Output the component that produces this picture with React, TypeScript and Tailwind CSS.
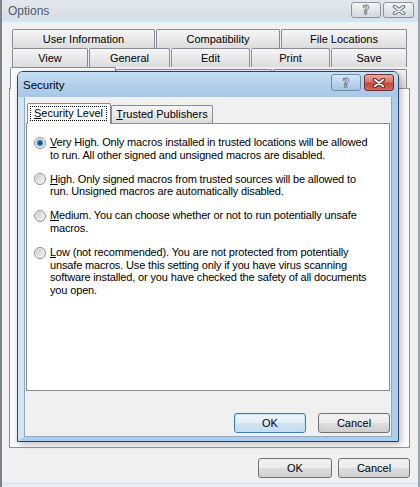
import React from 'react';

const Radio = ({ id, checked }: { id: string; checked?: boolean }) => (
  <svg width="12" height="12" viewBox="0 0 12 12" className="shrink-0 mt-[0.5px]">
    <defs>
      <linearGradient id={`${id}-bg`} x1="0" y1="0" x2="1" y2="1">
        <stop offset="0" stopColor="#cbcbcb" />
        <stop offset="1" stopColor="#f6f6f6" />
      </linearGradient>
      <radialGradient id={`${id}-dot`} cx="0.5" cy="0.5" r="0.5">
        <stop offset="0" stopColor="#0b3656" />
        <stop offset="0.5" stopColor="#1b5f8e" />
        <stop offset="1" stopColor="#5fb5e4" />
      </radialGradient>
    </defs>
    <circle cx="6" cy="6" r="5.5" fill="#f3f3f3" stroke="#8d8e8f" />
    <circle cx="6" cy="6" r="4.2" fill={`url(#${id}-bg)`} />
    {checked && <circle cx="6" cy="6" r="3.3" fill={`url(#${id}-dot)`} />}
  </svg>
);

const CloseGlyph = ({ outline, fill }: { outline: string; fill: string }) => (
  <svg width="14" height="10" viewBox="0 0 14 10">
    <path d="M2.5 1.5 L11.5 8.5 M11.5 1.5 L2.5 8.5" stroke={outline} strokeWidth="3.6" strokeLinecap="round" />
    <path d="M2.5 1.5 L11.5 8.5 M11.5 1.5 L2.5 8.5" stroke={fill} strokeWidth="1.6" strokeLinecap="round" />
  </svg>
);

const tabBase =
  'flex items-center justify-center border border-b-0 border-[#898c95] rounded-t-[2px] bg-[linear-gradient(#f5f5f5,#e9e9e9_50%,#dcdcdc)] whitespace-nowrap';

const btnBase =
  'h-[20px] flex items-center justify-center rounded-[3px] border text-[11px]';

export default function App() {
  return (
    <div className="w-[420px] h-[487px] relative overflow-hidden flex flex-col bg-[#f0f0f0] border-l-2 border-r-2 border-l-[#7d838a] border-r-[#9aa1a8] font-['Liberation_Sans',Arial,sans-serif] text-[11px] text-black">
      {/* Options title bar */}
      <div className="h-[19px] shrink-0 flex items-start bg-[linear-gradient(#e4e8ed,#d8dde3)]">
        <span className="ml-[6px] mt-[3px] leading-[16px] text-[12px] text-[#4d5c6d]">Options</span>
        <div className="ml-auto mr-[4px] mt-[2px] flex gap-[2px]">
          <div className="w-[30px] h-[16px] rounded-[3px] border border-[#8b929b] bg-[linear-gradient(#f3f5f7,#e3e7eb_50%,#d3d9e0)] flex items-center justify-center">
            <span className="font-['DejaVu_Sans',sans-serif] font-bold text-[12px] leading-none text-[#f2f4f6] [-webkit-text-stroke:0.8px_#6b737c]">?</span>
          </div>
          <div className="w-[31px] h-[16px] rounded-[3px] border border-[#8b929b] bg-[linear-gradient(#f3f5f7,#e3e7eb_50%,#d3d9e0)] flex items-center justify-center">
            <CloseGlyph outline="#6b737c" fill="#eef1f4" />
          </div>
        </div>
      </div>
      <div className="h-[3px] shrink-0 bg-[#cfe6f7]" />

      {/* Options body */}
      <div className="flex-1 flex flex-col pl-[7px] pr-[8px] pt-[7px]">
        <div className="flex gap-[1px] ml-[3px] h-[19px]">
          <div className={`${tabBase} w-[143px] h-[19px]`}>User Information</div>
          <div className={`${tabBase} w-[124px] h-[19px]`}>Compatibility</div>
          <div className={`${tabBase} w-[126px] h-[19px]`}>File Locations</div>
        </div>
        <div className="flex gap-[1px] ml-[3px] h-[19px]">
          <div className={`${tabBase} w-[76px] h-[19px]`}>View</div>
          <div className={`${tabBase} w-[81px] h-[19px]`}>General</div>
          <div className={`${tabBase} w-[79px] h-[19px]`}>Edit</div>
          <div className={`${tabBase} w-[79px] h-[19px]`}>Print</div>
          <div className={`${tabBase} w-[76px] h-[19px]`}>Save</div>
        </div>
        {/* third tab row, mostly hidden under the dialog */}
        <div className="flex items-end ml-[1px] h-[21px] relative z-10">
          <div className="w-[106px] h-[22px] -mb-px border border-b-0 border-[#898c95] rounded-t-[2px] bg-[#fbfbfb]" />
          <div className={`${tabBase} w-[156px] h-[19px]`} />
          <div className={`${tabBase} w-[134px] h-[19px] ml-[1px]`} />
        </div>
        <div className="h-[360px] shrink-0 border border-[#8e9496] bg-[#fbfbfb]" />
        <div className="mt-[10px] flex justify-end gap-[6px]">
          <div className={`${btnBase} w-[74px] border-[#707070] bg-[linear-gradient(#f2f2f2,#ebebeb_50%,#dddddd_51%,#cfcfcf)]`}>OK</div>
          <div className={`${btnBase} w-[72px] border-[#707070] bg-[linear-gradient(#f2f2f2,#ebebeb_50%,#dddddd_51%,#cfcfcf)]`}>Cancel</div>
        </div>
      </div>
      <div className="h-[4px] shrink-0 border-t border-[#cfe2f1] bg-[#e8edf2]" />

      {/* Security dialog */}
      <div className="absolute z-30 left-[15px] top-[71px] w-[382px] h-[371px] flex flex-col border border-[#2a4460] rounded-t-[6px] overflow-hidden shadow-[2px_2px_6px_rgba(0,0,0,0.25)]">
        <div className="h-[25px] shrink-0 flex items-start bg-[linear-gradient(#c8def3,#b3d0ec_50%,#a7c8e8)]">
          <span className="ml-[5px] mt-[6px] leading-[14px] text-[11.5px] text-black">Security</span>
          <div className="ml-auto mr-[4px] mt-[2px] flex gap-[3px]">
            <div className="w-[30px] h-[17px] rounded-[3px] border border-[#6f8aa6] bg-[linear-gradient(#d6e7f6,#bcd5ec_50%,#a4c3e3)] flex items-center justify-center">
              <span className="font-['DejaVu_Sans',sans-serif] font-bold text-[12px] leading-none text-[#f7f9fb] [-webkit-text-stroke:0.8px_#5d6f82]">?</span>
            </div>
            <div className="w-[30px] h-[17px] rounded-[3px] border border-[#6e2e29] bg-[linear-gradient(#e9aaa0,#d9786c_45%,#c7473b_55%,#cf6a5c)] flex items-center justify-center">
              <CloseGlyph outline="#5e2420" fill="#ffffff" />
            </div>
          </div>
        </div>
        <div className="flex-1 flex border-l-[6px] border-r-[6px] border-b-[4px] border-l-[#d6e5f3] border-r-[#a9cdea] border-b-[#a9cdea]">
          <div className="flex-1 flex flex-col bg-[#f0f0f0] border-x border-b border-[#8fa9c4] px-[1px] pt-[6px] pb-[3px]">
            {/* inner tabs */}
            <div className="h-[20px] shrink-0 flex items-end pl-[1px] relative z-10">
              <div className="w-[84px] h-[21px] -mb-px border border-b-0 border-[#898c95] rounded-t-[2px] bg-white pl-[2px] pt-[2px]">
                <div className="w-[77px] h-[15px] border border-dotted border-black flex items-center justify-center whitespace-nowrap">
                  <span>
                    <span className="underline">S</span>ecurity Level
                  </span>
                </div>
              </div>
              <div className={`${tabBase} w-[102px] h-[18px]`}>
                <span>
                  <span className="underline">T</span>rusted Publishers
                </span>
              </div>
            </div>
            <div className="h-[268px] shrink-0 border border-[#898c95] bg-white pl-[7px] pt-[12px]">
              <div className="flex flex-col gap-[11.5px] leading-[12.6px] tracking-[-0.15px] whitespace-nowrap">
                <div className="flex items-start gap-[4px]">
                  <Radio id="r1" checked />
                  <p>
                    <span className="underline">V</span>ery High. Only macros installed in trusted locations will be allowed
                    <br />
                    to run. All other signed and unsigned macros are disabled.
                  </p>
                </div>
                <div className="flex items-start gap-[4px]">
                  <Radio id="r2" />
                  <p>
                    <span className="underline">H</span>igh. Only signed macros from trusted sources will be allowed to
                    <br />
                    run. Unsigned macros are automatically disabled.
                  </p>
                </div>
                <div className="flex items-start gap-[4px]">
                  <Radio id="r3" />
                  <p>
                    <span className="underline">M</span>edium. You can choose whether or not to run potentially unsafe
                    <br />
                    macros.
                  </p>
                </div>
                <div className="flex items-start gap-[4px]">
                  <Radio id="r4" />
                  <p>
                    <span className="underline">L</span>ow (not recommended). You are not protected from potentially
                    <br />
                    unsafe macros. Use this setting only if you have virus scanning
                    <br />
                    software installed, or you have checked the safety of all documents
                    <br />
                    you open.
                  </p>
                </div>
              </div>
            </div>
            <div className="mt-[22px] flex justify-end gap-[12px]">
              <div className={`${btnBase} w-[72px] border-[#3c7fb1] bg-[linear-gradient(#eef5fb,#e2eef8_50%,#d1e4f3_51%,#c5dcee)] shadow-[inset_0_0_0_1px_#bfe3f7]`}>OK</div>
              <div className={`${btnBase} w-[72px] border-[#707070] bg-[linear-gradient(#f2f2f2,#ebebeb_50%,#dddddd_51%,#cfcfcf)]`}>Cancel</div>
            </div>
          </div>
        </div>
      </div>
    </div>
  );
}
